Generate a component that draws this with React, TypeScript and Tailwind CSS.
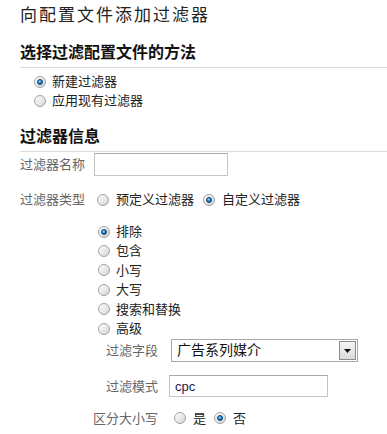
import React from "react";

function Radio({ checked = false }: { checked?: boolean }) {
  return (
    <span className="relative inline-block h-[12px] w-[12px] shrink-0 rounded-full border border-[#a2a2a2] bg-[linear-gradient(135deg,#ffffff,#d4d4d4)]">
      {checked && (
        <span className="absolute inset-[2px] rounded-full border border-[#0b3f73] bg-[radial-gradient(circle_at_40%_35%,#8fd8ff,#1372c4_60%,#0a4f8f)]" />
      )}
    </span>
  );
}

function Option({ label, checked = false }: { label: string; checked?: boolean }) {
  return (
    <div className="flex h-[19.4px] items-center gap-[6px] text-[13px] text-[#222]">
      <Radio checked={checked} />
      <span>{label}</span>
    </div>
  );
}

export default function App() {
  return (
    <div
      className="h-[434px] w-[387px] overflow-hidden bg-white pl-5"
      style={{ fontFamily: '"Liberation Sans", "Noto Sans CJK SC", sans-serif' }}
    >
      {/* TITLE */}
      <h1 className="pt-[6px] text-[17px] leading-[20px] tracking-[2px] text-[#222]">
        向配置文件添加过滤器
      </h1>

      {/* METHOD */}
      <h2 className="mt-[17px] border-b border-[#dcdcdc] pb-[4px] text-[16px] font-bold leading-[20px] text-[#111]">
        选择过滤配置文件的方法
      </h2>
      <div className="mt-[4px] pl-[14px]">
        <div className="flex h-[19px] items-center gap-[6px] text-[13px] text-[#222]">
          <Radio checked />
          <span>新建过滤器</span>
        </div>
        <div className="flex h-[19px] items-center gap-[6px] text-[13px] text-[#222]">
          <Radio />
          <span>应用现有过滤器</span>
        </div>
      </div>

      {/* INFO */}
      <h2 className="mt-[17px] border-b border-[#dcdcdc] pb-[4px] text-[16px] font-bold leading-[20px] text-[#111]">
        过滤器信息
      </h2>

      <div className="mt-[1px] flex h-[23px] items-center text-[13px]">
        <span className="w-[74px] text-[#666]">过滤器名称</span>
        <div className="h-[23px] w-[134px] border border-[#c4c4c4] border-t-[#a9a9a9] bg-white" />
      </div>

      <div className="mt-[14px] flex h-[20px] items-center text-[13px]">
        <span className="w-[77px] text-[#666]">过滤器类型</span>
        <div className="flex items-center gap-[7px] text-[#222]">
          <Radio />
          <span>预定义过滤器</span>
        </div>
        <div className="ml-[9px] flex items-center gap-[7px] text-[#222]">
          <Radio checked />
          <span>自定义过滤器</span>
        </div>
      </div>

      <div className="mt-[12px] pl-[78px]">
        <Option label="排除" checked />
        <Option label="包含" />
        <Option label="小写" />
        <Option label="大写" />
        <Option label="搜索和替换" />
        <Option label="高级" />
      </div>

      {/* FIELD */}
      <div className="mt-[1px] flex h-[23px] items-center text-[13px]">
        <span className="w-[138px] text-right text-[#666]">过滤字段</span>
        <div className="ml-[13px] flex h-[23px] w-[187px] items-center border border-[#a8a8a8] bg-white pl-[5px]">
          <span className="flex-1 text-[14px] text-[#111]">广告系列媒介</span>
          <div className="mr-[1px] flex h-[19px] w-[17px] items-center justify-center border border-[#8c8c8c] bg-[linear-gradient(#f6f6f6,#d9d9d9)]">
            <svg width="7" height="4" viewBox="0 0 7 4">
              <path d="M0 0h7L3.5 4z" fill="#111" />
            </svg>
          </div>
        </div>
      </div>

      <div className="mt-[13px] flex h-[22px] items-center text-[13px]">
        <span className="w-[138px] text-right text-[#666]">过滤模式</span>
        <div className="ml-[11px] flex h-[22px] w-[159px] items-center border border-[#c4c4c4] border-t-[#a9a9a9] bg-white pl-[5px] text-[13px] text-[#1c1c4a]">
          cpc
        </div>
      </div>

      <div className="mt-[12px] flex h-[18px] items-center text-[13px]">
        <span className="w-[138px] text-right text-[#666]">区分大小写</span>
        <div className="ml-[16px] flex items-center gap-[7px] text-[#222]">
          <Radio />
          <span>是</span>
        </div>
        <div className="ml-[8px] flex items-center gap-[7px] text-[#222]">
          <Radio checked />
          <span>否</span>
        </div>
      </div>
    </div>
  );
}
